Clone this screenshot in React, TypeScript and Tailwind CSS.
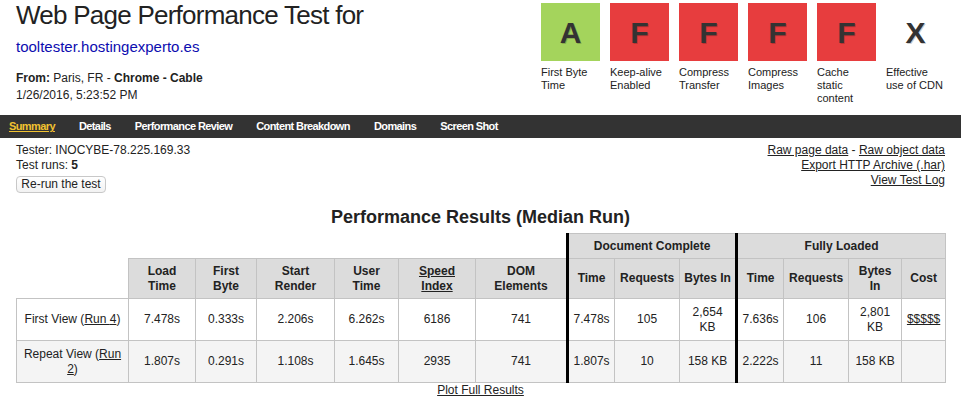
import React from "react";

const grades = [
  { letter: "A", label: "First Byte Time", bg: "bg-[#a4d45c]" },
  { letter: "F", label: "Keep-alive Enabled", bg: "bg-[#e73d3e]" },
  { letter: "F", label: "Compress Transfer", bg: "bg-[#e73d3e]" },
  { letter: "F", label: "Compress Images", bg: "bg-[#e73d3e]" },
  { letter: "F", label: "Cache static content", bg: "bg-[#e73d3e]" },
  { letter: "X", label: "Effective use of CDN", bg: "" },
];

const tabs = ["Summary", "Details", "Performance Review", "Content Breakdown", "Domains", "Screen Shot"];

const cols = [112, 67, 61, 78, 64, 77, 92, 47, 65, 57, 47, 65, 53, 44];

const headers: { lines: string[]; link?: boolean }[] = [
  { lines: ["Load", "Time"] },
  { lines: ["First", "Byte"] },
  { lines: ["Start", "Render"] },
  { lines: ["User", "Time"] },
  { lines: ["Speed", "Index"], link: true },
  { lines: ["DOM", "Elements"] },
  { lines: ["Time"] },
  { lines: ["Requests"] },
  { lines: ["Bytes In"] },
  { lines: ["Time"] },
  { lines: ["Requests"] },
  { lines: ["Bytes", "In"] },
  { lines: ["Cost"] },
];

const runs = [
  {
    label: "First View",
    run: "4",
    bg: "bg-white",
    values: ["7.478s", "0.333s", "2.206s", "6.262s", "6186", "741", "7.478s", "105", "2,654 KB", "7.636s", "106", "2,801 KB"],
    cost: "$$$$$",
  },
  {
    label: "Repeat View",
    run: "2",
    bg: "bg-[#f4f4f4]",
    values: ["1.807s", "0.291s", "1.108s", "1.645s", "2935", "741", "1.807s", "10", "158 KB", "2.222s", "11", "158 KB"],
    cost: "",
  },
];

// table columns that start the Document Complete / Fully Loaded groups
const thick = (col: number) => (col === 7 || col === 10 ? "border-l-[3px] border-l-black" : "");

export default function App() {
  return (
    <div className="w-[961px] h-[401px] overflow-hidden bg-white text-[#222] font-['Liberation_Sans',Arial,sans-serif] text-[12px]">
      <div className="flex justify-between px-4 h-[115px]">
        <div>
          <h1 className="text-[26px] leading-[30px] tracking-[-0.75px] text-[#222]">Web Page Performance Test for</h1>
          <a className="block mt-[7px] text-[15px] leading-[20px] text-[#0c0cb0]">tooltester.hostingexperto.es</a>
          <div className="mt-[13px] leading-[17px]">
            <b>From:</b> Paris, FR - <b>Chrome - Cable</b>
          </div>
          <div className="leading-[17px]">1/26/2016, 5:23:52 PM</div>
        </div>
        <div className="flex gap-[10px] pt-[3px]">
          {grades.map((g, i) => (
            <div key={i} className="w-[59px]">
              <div
                className={`h-[58px] flex items-center justify-center text-[30px] font-bold text-[#333] [text-shadow:1px_1px_0_rgba(0,0,0,0.2)] ${g.bg}`}
              >
                {g.letter}
              </div>
              <div className="mt-[5px] text-[11px] leading-[13px]">{g.label}</div>
            </div>
          ))}
        </div>
      </div>

      <div className="h-[23px] bg-[#333] flex items-center pl-[9px] gap-[24px]">
        {tabs.map((t, i) => (
          <a
            key={t}
            className={`text-[11px] font-bold tracking-[-0.6px] ${i === 0 ? "text-[#f2c230] underline" : "text-white"}`}
          >
            {t}
          </a>
        ))}
      </div>

      <div className="flex justify-between px-4 pt-[5px]">
        <div>
          <div className="leading-[15px]">Tester: INOCYBE-78.225.169.33</div>
          <div className="leading-[15px]">
            Test runs: <b>5</b>
          </div>
          <button className="mt-[3px] h-[17px] w-[90px] rounded-[4px] border border-[#c8c8c8] bg-gradient-to-b from-white to-[#f2f2f2] text-[12px] leading-[15px] text-[#222]">
            Re-run the test
          </button>
        </div>
        <div className="text-right leading-[15px]">
          <div>
            <a className="underline">Raw page data</a> - <a className="underline">Raw object data</a>
          </div>
          <div>
            <a className="underline">Export HTTP Archive (.har)</a>
          </div>
          <div>
            <a className="underline">View Test Log</a>
          </div>
        </div>
      </div>

      <h2 className="mt-[13px] text-center text-[18px] leading-[22px] font-bold">Performance Results (Median Run)</h2>

      <table className="mt-[5px] mx-4 w-[929px] table-fixed border-collapse text-center leading-[15px]">
        <colgroup>
          {cols.map((w, i) => (
            <col key={i} style={{ width: w }} />
          ))}
        </colgroup>
        <thead>
          <tr className="font-bold">
            <th colSpan={7} className="border-0 p-0"></th>
            <th colSpan={3} className="py-[4.5px] bg-[#dcdcdc] border border-[#c3c3c3] border-l-[3px] border-l-black">
              Document Complete
            </th>
            <th colSpan={4} className="py-[4.5px] bg-[#dcdcdc] border border-[#c3c3c3] border-l-[3px] border-l-black">
              Fully Loaded
            </th>
          </tr>
          <tr className="font-bold">
            <th className="border-0 p-0"></th>
            {headers.map((h, i) => (
              <th
                key={i}
                className={`py-[4.5px] px-[4px] bg-[#dcdcdc] border border-[#c3c3c3] ${thick(i + 1)}`}
              >
                {h.lines.map((l, j) => (
                  <div key={j} className={h.link ? "underline" : ""}>
                    {l}
                  </div>
                ))}
              </th>
            ))}
          </tr>
        </thead>
        <tbody>
          {runs.map((r) => (
            <tr key={r.label} className={r.bg}>
              <td className="py-[5.5px] px-[4px] border border-[#c3c3c3]">
                {r.label} (<a className="underline">Run {r.run}</a>)
              </td>
              {r.values.map((v, i) => (
                <td key={i} className={`py-[5.5px] px-[4px] border border-[#c3c3c3] ${thick(i + 1)}`}>
                  {v}
                </td>
              ))}
              <td className="py-[5.5px] px-[4px] border border-[#c3c3c3]">
                {r.cost && <a className="underline">{r.cost}</a>}
              </td>
            </tr>
          ))}
        </tbody>
      </table>

      <div className="text-center leading-[15px]">
        <a className="underline">Plot Full Results</a>
      </div>
    </div>
  );
}
